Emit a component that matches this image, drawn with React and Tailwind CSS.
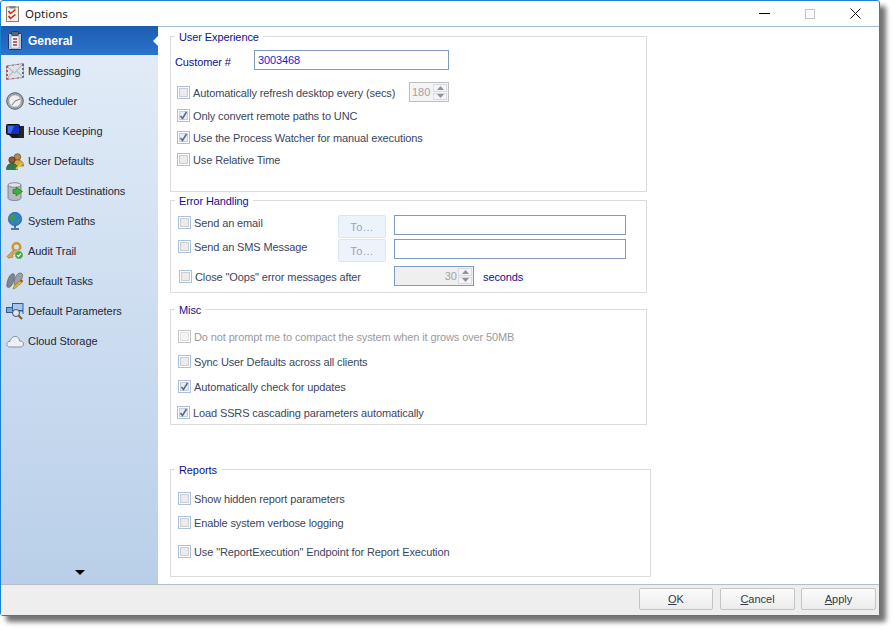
import React from "react";

const font = { fontFamily: '"Liberation Sans", Arial, sans-serif' };

const icons = {
  General: (
    <svg width="16" height="19" viewBox="0 0 16 19">
      <rect x="1.500" y="2.500" width="13" height="16" rx="1" fill="#b9cbe0" stroke="#1d3a5c" />
      <rect x="4" y="5" width="8" height="12" fill="#eef3f8" stroke="#7d8da0" strokeWidth="0.5" />
      <rect x="4.500" y="0.500" width="7" height="4" rx="1" fill="#5c6672" stroke="#1c2530" strokeWidth="0.6" />
      <path d="M6 8h4M6 11h4M6 14h4" stroke="#b5352a" strokeWidth="1.500" />
    </svg>
  ),
  Messaging: (
    <svg width="18" height="17" viewBox="0 0 18 17">
      <path d="M.5 3 17.500.5V14.500L.5 16.500Z" fill="#dfe3e8" stroke="#8f99a6" strokeWidth="0.8" />
      <path d="M.5 3 8.500 10 17.500.5M.5 16.500 7 8.500M17.500 14.500 10.500 8" fill="none" stroke="#a2abb6" strokeWidth="1" />
      <path d="M1 3V16.500" stroke="#c0504d" strokeWidth="2" strokeDasharray="2 2" />
      <path d="M17 1V14.500" stroke="#4f6fa8" strokeWidth="2" strokeDasharray="2 2" />
      <path d="M1 3 17 .8M1 16.200 17 14.300" stroke="#b8606a" strokeWidth="1" strokeDasharray="2 3" />
    </svg>
  ),
  Scheduler: (
    <svg width="18" height="18" viewBox="0 0 18 18">
      <circle cx="9" cy="9" r="8.300" fill="#a9adb2" stroke="#3f444a" strokeWidth="0.8" />
      <circle cx="9" cy="9" r="6.300" fill="#eceef0" stroke="#7f8388" strokeWidth="0.7" />
      <path d="M9 9 14 7M9 9 6 13" stroke="#73777c" strokeWidth="1" />
    </svg>
  ),
  "House Keeping": (
    <svg width="18" height="15" viewBox="0 0 18 15">
      <rect x="12" y="2" width="6" height="12" fill="#262626" />
      <rect x="0.500" y="0.500" width="13" height="10" rx="1" fill="#0e2fc0" stroke="#0c0c0c" />
      <path d="M2 2h6l-3 7H2Z" fill="#3c6bf0" />
      <path d="M3 11h9l2 3H6Z" fill="#161616" />
    </svg>
  ),
  "User Defaults": (
    <svg width="18" height="17" viewBox="0 0 18 17">
      <circle cx="11.500" cy="4" r="3.300" fill="#b98a52" stroke="#5e3d1a" strokeWidth="0.6" />
      <path d="M6 13c0-4 2-6 5.500-6S17.500 9 17.500 13Z" fill="#d9a63c" stroke="#6e5416" strokeWidth="0.6" />
      <circle cx="6" cy="7" r="3.200" fill="#8e5c34" stroke="#3c2410" strokeWidth="0.6" />
      <path d="M.5 16.500c0-4 2-6 5.500-6s5.500 2 5.500 6Z" fill="#2e7d46" stroke="#1b4a2a" strokeWidth="0.6" />
      <path d="M10 16 16 10" stroke="#e8c73c" strokeWidth="1.800" />
    </svg>
  ),
  "Default Destinations": (
    <svg width="16" height="19" viewBox="0 0 16 19">
      <path d="M1 3v13c0 1.500 3 2.500 6.500 2.500S14 17.500 14 16V3Z" fill="#b4babf" stroke="#62686e" strokeWidth="0.7" />
      <ellipse cx="7.500" cy="3" rx="6.500" ry="2.300" fill="#dfe3e6" stroke="#62686e" strokeWidth="0.7" />
      <path d="M6 7.500h3V5l6.500 4.500L9 14v-2.500H6Z" fill="#3fae3c" stroke="#1f6d1e" strokeWidth="0.6" />
    </svg>
  ),
  "System Paths": (
    <svg width="16" height="18" viewBox="0 0 16 18">
      <circle cx="8" cy="7" r="6.700" fill="#2f7fd0" stroke="#1b4f88" strokeWidth="0.6" />
      <path d="M3 3.500c2-1.500 5-1.500 6 0 .5 2-2 2-2.500 4S5 10 3.500 8.500 2 5 3 3.500ZM10 7c1.500-.5 3 0 3 1s-1.500 3-2.500 3S9 8 10 7Z" fill="#3f9c45" />
      <path d="M8 13.500V16M4 17h8" stroke="#35506d" strokeWidth="1.500" />
    </svg>
  ),
  "Audit Trail": (
    <svg width="18" height="18" viewBox="0 0 18 18">
      <circle cx="10.500" cy="5" r="3.800" fill="none" stroke="#c9973e" strokeWidth="2.600" />
      <path d="M8 7.500 1 14.500l2 2 1.500-1.500 1 1 1.500-1.500-.5-1L10 10" fill="#d6a84f" stroke="#8a6220" strokeWidth="0.6" />
      <circle cx="13" cy="13" r="4.200" fill="#3da53a" stroke="#ffffff" strokeWidth="0.5" />
      <path d="M11 13l1.500 1.500 2.500-3" fill="none" stroke="#fff" strokeWidth="1.200" />
    </svg>
  ),
  "Default Tasks": (
    <svg width="18" height="18" viewBox="0 0 18 18">
      <path d="M.8 14C1 9 3 3 6 2s3 2 2 5-2 7-4 8-3.200 0-3.200-1Z" fill="#7f868e" stroke="#4a5057" strokeWidth="0.6" />
      <path d="M8 12C8 7 11 1 14 1s3 3 2 5-3 5-5 6-3 1-3 0Z" fill="#9aa1a8" stroke="#4a5057" strokeWidth="0.6" />
      <path d="M7 17l1-3 7-6 1.500 2-7 6Z" fill="#e0b93c" stroke="#7a5f12" strokeWidth="0.5" />
      <path d="M14 9l2-1.500 1 1.500-1.500 1.500Z" fill="#c0392b" />
    </svg>
  ),
  "Default Parameters": (
    <svg width="18" height="18" viewBox="0 0 18 18">
      <rect x="0.500" y="5.500" width="7" height="5" fill="#7fa6d8" stroke="#2d5c98" />
      <rect x="6.500" y="1.500" width="10.500" height="7" fill="#a9c6ea" stroke="#2d5c98" />
      <path d="M7 9h10v3" fill="none" stroke="#2d5c98" />
      <circle cx="10" cy="11" r="3.500" fill="#dbe7f3" stroke="#4a4f55" />
      <path d="M12.500 13.500 16 17" stroke="#7a5b2a" strokeWidth="2" />
    </svg>
  ),
  "Cloud Storage": (
    <svg width="18" height="14" viewBox="0 0 18 14">
      <path d="M4 13C1.500 13 .5 11 .8 9.500 1 8 2.500 7 4 7.500 4.500 4.500 7 2 10 2.500c2.500.5 3.500 2.500 3.500 4.500 2-.3 4 1 4 3s-1.500 3-3.500 3Z" fill="#edf0f4" stroke="#7f8791" strokeWidth="0.9" />
    </svg>
  ),
};

const nav = ["Messaging", "Scheduler", "House Keeping", "User Defaults", "Default Destinations", "System Paths", "Audit Trail", "Default Tasks", "Default Parameters", "Cloud Storage"];

function Checkbox({ checked, disabled }) {
  return (
    <span className={`flex h-[13px] w-[13px] shrink-0 items-center justify-center border bg-white ${disabled ? "border-[#c4c4c4]" : "border-[#a9c1e0]"}`}>
      <span className={`relative block h-[9px] w-[9px] border ${disabled ? "border-[#dedede] bg-[#f4f4f4]" : "border-[#cdcdcd] bg-[#ebebeb]"}`}>
        {checked && (
          <svg className="absolute -left-px -top-px" width="9" height="9" viewBox="0 0 9 9">
            <path d="M1.500 5 3.500 7.500 7.500 1" fill="none" stroke="#4a69a0" strokeWidth="1.500" />
          </svg>
        )}
      </span>
    </span>
  );
}

function Check({ label, checked, disabled, className = "" }) {
  return (
    <div className={`flex h-[14px] items-center gap-[3px] ${className}`}>
      <Checkbox checked={checked} disabled={disabled} />
      <span className={`whitespace-nowrap pt-[2px] text-[11px] leading-[14px] tracking-[-0.12px] ${disabled ? "text-[#9a9aa0]" : "text-[#3a4660]"}`}>{label}</span>
    </div>
  );
}

function Group({ title, className, children }) {
  return (
    <div className={`relative border border-[#dcdcdc] ${className}`}>
      <span className="absolute left-[4px] top-[-6px] bg-white px-[4px] text-[11px] leading-[13px] tracking-[-0.1px] text-[#101090]">{title}</span>
      {children}
    </div>
  );
}

function Spin({ value, className, inner }) {
  return (
    <div className={`flex items-center justify-between text-[#a2a2a2] ${className}`}>
      <span className={`text-[11px] ${inner}`}>{value}</span>
      <span className="flex h-[16px] w-[14px] flex-col gap-px">
        <span className="flex flex-1 items-center justify-center border border-[#d6dbe2] bg-[#f2f4f7]">
          <svg width="7" height="4" viewBox="0 0 7 4"><path d="M3.500 0 7 4H0Z" fill="#8f9296" /></svg>
        </span>
        <span className="flex flex-1 items-center justify-center border border-[#d6dbe2] bg-[#f2f4f7]">
          <svg width="7" height="4" viewBox="0 0 7 4"><path d="M0 0H7L3.500 4Z" fill="#8f9296" /></svg>
        </span>
      </span>
    </div>
  );
}

function ToButton() {
  return (
    <button className="flex h-[23px] w-[48px] shrink-0 items-center justify-center rounded-[2px] border border-[#dbe6f2] bg-[#edf3fb] pt-[2px] text-[11px] tracking-[0.5px] text-[#9aa5b2]">
      To...
    </button>
  );
}

function FootButton({ u, rest, className }) {
  return (
    <button className={`flex h-[22px] items-center justify-center rounded-[2px] border border-[#c4c4c4] bg-gradient-to-b from-[#fbfbfb] to-[#ececec] text-[11px] text-[#333c50] ${className}`}>
      <span className="underline">{u}</span>
      {rest}
    </button>
  );
}

export default function App() {
  return (
    <div className="h-[631px] w-[895px] bg-white" style={font}>
      <div className="flex h-[616px] w-[880px] flex-col rounded-[3px] border border-[#1b82d6] bg-white shadow-[6px_6px_5px_rgba(0,0,0,0.55)]">
        {/* Title bar */}
        <div className="flex h-[25px] shrink-0 items-center">
          <svg className="ml-[5px]" width="13" height="16" viewBox="0 0 13 16">
            <rect x="0.500" y="1" width="12" height="14.500" fill="#f4f0e6" stroke="#8a7f6c" />
            <rect x="3.500" y="0" width="6" height="2.500" fill="#7c828c" />
            <path d="M2.500 5 4.500 7.500 9.500 3.500M2.500 10 4.500 12.500 9.500 8.500" fill="none" stroke="#d0261c" strokeWidth="1.600" />
          </svg>
          <span className="ml-[6px] text-[11.500px] text-[#1a1a1a]" style={{ fontFamily: '"Noto Sans", sans-serif' }}>Options</span>
          <div className="ml-auto flex items-center">
            <span className="h-px w-[11px] bg-black" />
            <span className="ml-[35px] h-[10px] w-[10px] border border-[#c4c4c4]" />
            <svg className="ml-[35px] mr-[18px]" width="11" height="11" viewBox="0 0 11 11">
              <path d="M.5.500 10.500 10.500M10.500.500 .5 10.500" stroke="#111" strokeWidth="1" />
            </svg>
          </div>
        </div>

        <div className="flex min-h-0 flex-1">
          {/* Sidebar */}
          <aside className="relative flex w-[157px] shrink-0 flex-col bg-gradient-to-b from-[#e3edf8] to-[#b9cfe9]">
            <div className="relative flex h-[29px] items-center bg-gradient-to-b from-[#1c5cb0] to-[#2b73cc]">
              <span className="ml-[5px] flex w-[18px] justify-center">{icons.General}</span>
              <span className="ml-[4px] text-[12px] font-bold text-white">General</span>
              <span className="absolute right-0 top-[10px] border-y-[5px] border-r-[5px] border-y-transparent border-r-white" />
            </div>
            <div className="flex flex-col pt-px">
              {nav.map((n) => (
                <div key={n} className="flex h-[30px] items-center">
                  <span className="ml-[5px] flex w-[18px] justify-center">{icons[n]}</span>
                  <span className="ml-[4px] whitespace-nowrap text-[11px] tracking-[-0.06px] text-[#1e2838]">{n}</span>
                </div>
              ))}
            </div>
            <span className="absolute bottom-[9px] left-[74px] border-x-[5px] border-t-[5px] border-x-transparent border-t-black" />
          </aside>

          {/* Main */}
          <main className="min-w-0 flex-1 border-t border-[#a3b9d2] pl-[12px] pt-[9px]">
            <Group title="User Experience" className="h-[156px] w-[477px]">
              <div className="flex items-start pl-[4px] pt-[13px]">
                <span className="mt-[5px] w-[79px] text-[11px] leading-[14px] tracking-[-0.1px] text-[#101090]">Customer #</span>
                <div className="flex h-[20px] w-[195px] items-center border border-[#7f9cc0] pl-[3px] text-[11px] tracking-[-0.1px] text-[#1a1acc]">3003468</div>
              </div>
              <div className="mt-[12px] flex items-start pl-[6px]">
                <Check label="Automatically refresh desktop every (secs)" className="mt-[3px] w-[232px]" />
                <Spin value="180" className="h-[20px] w-[40px] border border-[#c0c0c0] bg-[#f4f4f4] pl-[2px] pr-[1px]" />
              </div>
              <div className="flex flex-col gap-[8px] pl-[6px] pt-[6px]">
                <Check checked label="Only convert remote paths to UNC" />
                <Check checked label="Use the Process Watcher for manual executions" />
                <Check label="Use Relative Time" />
              </div>
            </Group>

            <Group title="Error Handling" className="mt-[8px] h-[93px] w-[477px]">
              <div className="flex flex-col pl-[7px] pt-[14px]">
                <div className="flex items-start">
                  <Check label="Send an email" className="w-[160px]" />
                  <ToButton />
                  <div className="ml-[8px] h-[20px] w-[232px] border border-[#7f9cc0]" />
                </div>
                <div className="mt-px flex items-start">
                  <Check label="Send an SMS Message" className="w-[160px]" />
                  <ToButton />
                  <div className="ml-[8px] h-[20px] w-[232px] border border-[#7f9cc0]" />
                </div>
                <div className="mt-[4px] flex items-center">
                  <Check label={'Close "Oops" error messages after'} className="ml-px w-[215px]" />
                  <Spin value="30" inner="ml-auto mr-px" className="h-[20px] w-[80px] border border-[#7f9cc0] bg-[#efefef] pr-[1px]" />
                  <span className="ml-[9px] pt-[2px] text-[11px] tracking-[-0.1px] text-[#101090]">seconds</span>
                </div>
              </div>
            </Group>

            <Group title="Misc" className="mt-[16px] h-[116px] w-[477px]">
              <div className="flex flex-col pl-[7px] pt-[19px]">
                <Check disabled label="Do not prompt me to compact the system when it grows over 50MB" />
                <Check label="Sync User Defaults across all clients" className="mt-[11px]" />
                <Check checked label="Automatically check for updates" className="mt-[11px]" />
                <Check checked label="Load SSRS cascading parameters automatically" className="-ml-px mt-[12px]" />
              </div>
            </Group>

            <Group title="Reports" className="mt-[44px] h-[108px] w-[481px]">
              <div className="flex flex-col pl-[7px] pt-[21px]">
                <Check label="Show hidden report parameters" />
                <Check label="Enable system verbose logging" className="mt-[10px]" />
                <Check label={'Use "ReportExecution" Endpoint for Report Execution'} className="mt-[15px]" />
              </div>
            </Group>
          </main>
        </div>

        {/* Footer */}
        <div className="flex h-[31px] shrink-0 items-start border-t border-[#b4bdc8] bg-[#eeeeee] pt-[3px]">
          <FootButton u="O" rest="K" className="ml-[638px] w-[74px]" />
          <FootButton u="C" rest="ancel" className="ml-[7px] w-[75px]" />
          <FootButton u="A" rest="pply" className="ml-[6px] w-[75px]" />
        </div>
      </div>
    </div>
  );
}
